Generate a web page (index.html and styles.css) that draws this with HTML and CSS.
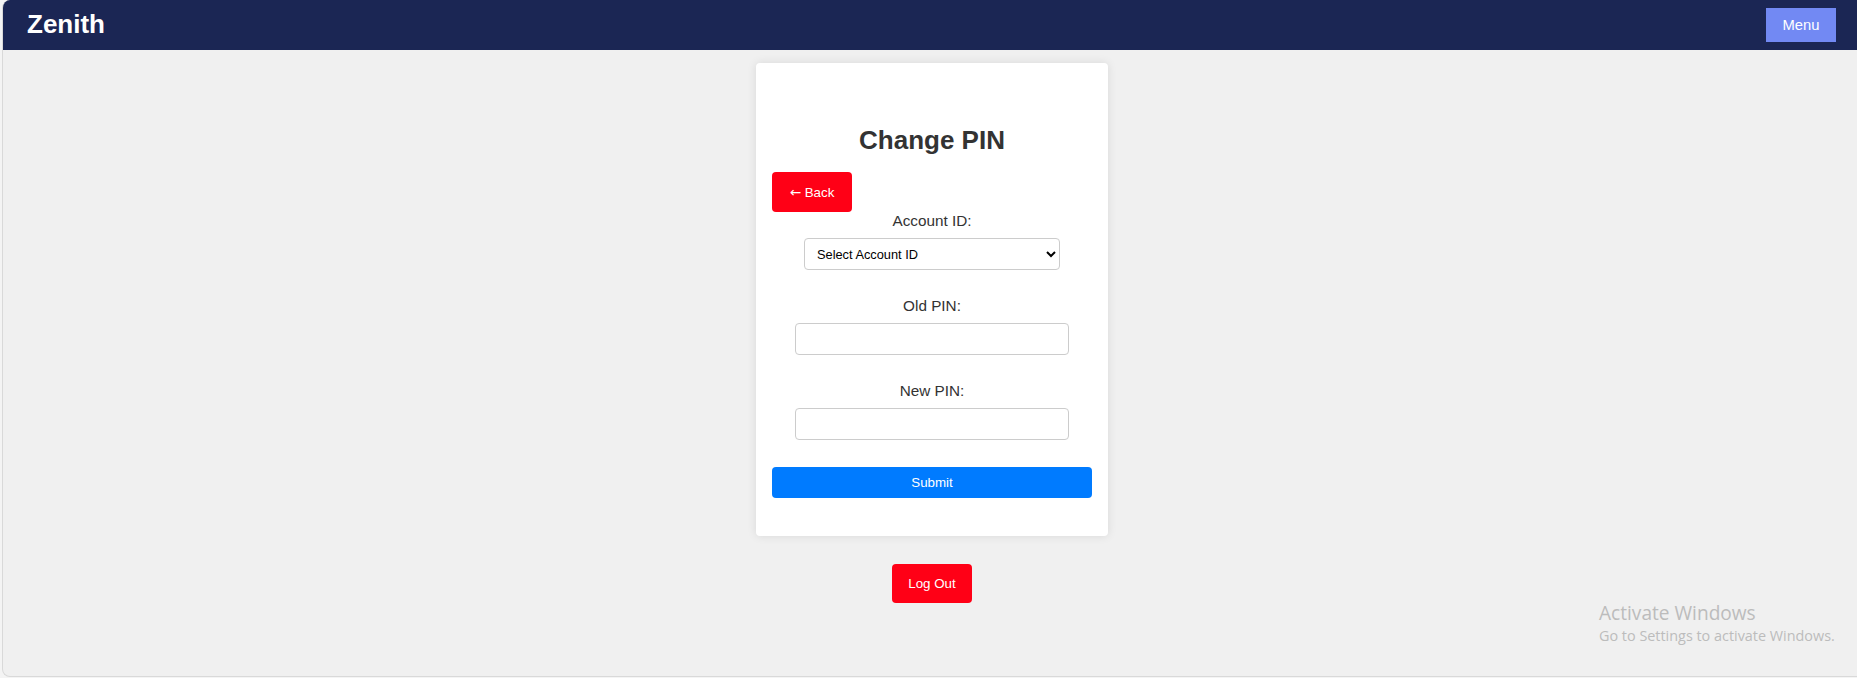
FILE: index.html
```html
<!DOCTYPE html>
<html lang="en">
<head>
<meta charset="utf-8">
<title>Zenith - Change PIN</title>
<link rel="stylesheet" href="styles.css">
</head>
<body>
<div class="window">
  <header class="topbar">
    <div class="brand">Zenith</div>
    <button class="menu-btn" type="button">Menu</button>
  </header>
  <main class="page">
    <div class="card">
      <h2 class="card-title">Change PIN</h2>
      <button class="btn-red back-btn" type="button"><span class="arrow">&larr;</span> Back</button>
      <label class="field-label" for="acc">Account ID:</label>
      <select id="acc" class="select">
        <option>Select Account ID</option>
      </select>
      <label class="field-label gap" for="oldpin">Old PIN:</label>
      <input id="oldpin" class="text-input" type="password">
      <label class="field-label gap" for="newpin">New PIN:</label>
      <input id="newpin" class="text-input" type="password">
      <button class="submit-btn" type="button">Submit</button>
    </div>
    <button class="btn-red logout-btn" type="button">Log Out</button>
  </main>
  <div class="watermark">
    <div class="wm-title">Activate Windows</div>
    <div class="wm-sub">Go to Settings to activate Windows.</div>
  </div>
</div>
</body>
</html>
```

FILE: styles.css
```css
* { box-sizing: border-box; }

html, body {
  margin: 0;
  padding: 0;
  height: 678px;
  overflow: hidden;
}

body {
  background: #f4f4f4;
  font-family: "Liberation Sans", Arial, sans-serif;
}

.window {
  position: relative;
  margin-left: 2px;
  height: 677px;
  background: #f0f0f0;
  border-left: 1px solid #d9d9d9;
  border-bottom: 1px solid #d9d9d9;
  border-radius: 8px 0 0 8px;
  overflow: hidden;
}

.topbar {
  height: 50px;
  background: #1b2654;
  display: flex;
  align-items: center;
  justify-content: space-between;
  padding: 0 21px 0 24px;
}

.brand {
  color: #ffffff;
  font-weight: bold;
  font-size: 26px;
  line-height: 30px;
  margin-top: -2px;
}

.menu-btn {
  width: 70px;
  height: 34px;
  background: #7289f3;
  color: #ffffff;
  border: none;
  border-radius: 0;
  font-family: "Liberation Sans", Arial, sans-serif;
  font-size: 14.8px;
  padding: 0;
}

.page {
  display: flex;
  flex-direction: column;
  align-items: center;
  padding-top: 13px;
  padding-left: 4px;
}

.card {
  width: 352px;
  background: #ffffff;
  border-radius: 4px;
  box-shadow: 0 0 10px rgba(0, 0, 0, 0.1);
  padding: 16px 16px 38px;
  display: flex;
  flex-direction: column;
  align-items: center;
}

.card-title {
  margin: 46px 0 17px;
  font-size: 26px;
  line-height: 30px;
  font-weight: bold;
  color: #333333;
}

.btn-red {
  width: 80px;
  height: 40px;
  background: #ff0016;
  color: #ffffff;
  border: none;
  border-radius: 4px;
  font-family: "Liberation Sans", Arial, sans-serif;
  font-size: 13.33px;
  padding: 0;
}

.arrow {
  font-family: "DejaVu Sans", sans-serif;
  font-size: 13.5px;
}

.back-btn {
  align-self: flex-start;
}

.field-label {
  display: block;
  font-size: 15.3px;
  line-height: 18px;
  color: #333333;
}

.field-label.gap {
  margin-top: 27px;
}

.select {
  margin-top: 8px;
  width: 256px;
  height: 32px;
  border: 1px solid #cccccc;
  border-radius: 4px;
  background: #ffffff;
  color: #000000;
  font-family: "Liberation Sans", Arial, sans-serif;
  font-size: 12.8px;
  padding: 0 6px 0 8px;
}

.text-input {
  margin-top: 8px;
  width: 274px;
  height: 32px;
  border: 1px solid #cccccc;
  border-radius: 4px;
  background: #ffffff;
  padding: 0 8px;
  font-size: 14px;
}

.submit-btn {
  margin-top: 27px;
  align-self: stretch;
  height: 31px;
  background: #007bff;
  color: #ffffff;
  border: none;
  border-radius: 4px;
  font-family: "Liberation Sans", Arial, sans-serif;
  font-size: 13.33px;
  padding: 0;
}

.logout-btn {
  margin-top: 28px;
  height: 39px;
}

.watermark {
  position: absolute;
  left: 1596px;
  top: 601px;
  color: #bcbcbc;
  font-family: "Open Sans", "Noto Sans", sans-serif;
}

.wm-title {
  font-size: 19.1px;
  line-height: 24px;
}

.wm-sub {
  font-size: 14.4px;
  line-height: 21px;
}
```
